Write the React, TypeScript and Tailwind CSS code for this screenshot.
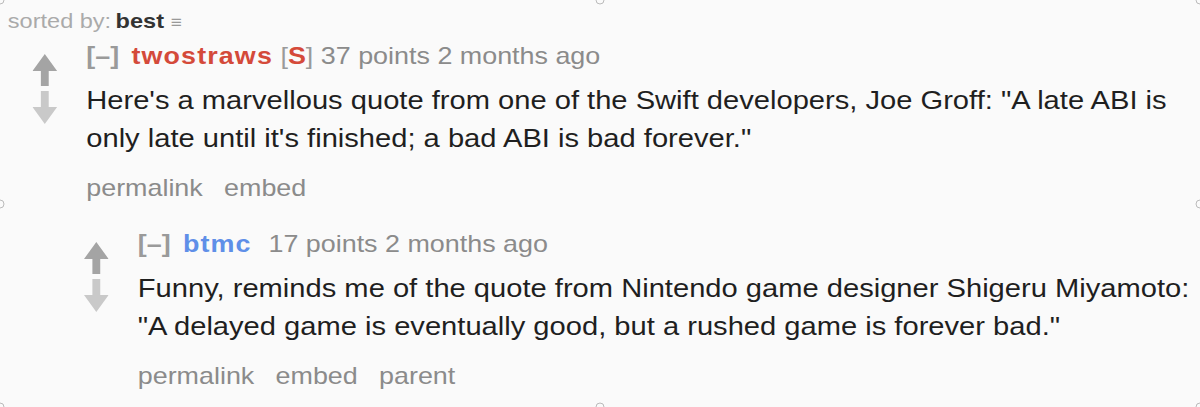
import React from "react";

type CommentProps = {
  author: string;
  authorClass: string;
  submitter?: boolean;
  points: number;
  age: string;
  lines: string[];
  buttons: string[];
};

const Arrows = () => (
  <div className="flex flex-col items-center gap-[5px] pt-[13px] w-[22px] shrink-0">
    {/* up */}
    <svg width="22" height="32" viewBox="0 0 22 32">
      <path d="M11 0 L22 17 L14.5 17 L14.5 32 L7.5 32 L7.5 17 L0 17 Z" fill="#a4a4a4" />
    </svg>
    {/* down */}
    <svg width="22" height="33" viewBox="0 0 22 33">
      <path d="M7.5 0 L14.5 0 L14.5 16 L22 16 L11 33 L0 16 L7.5 16 Z" fill="#c9c9c9" />
    </svg>
  </div>
);

const Comment = ({ author, authorClass, submitter, points, age, lines, buttons }: CommentProps) => {
  return (
    <div className="flex gap-[26px]">
      <Arrows />
      <div className="flex flex-col">
        {/* Tagline */}
        <p className="text-[24px] leading-[30px] text-[#8b8b8b] whitespace-nowrap">
          <span className="font-bold text-[#9a9a9a]">[–]</span>
          <span className={`ml-[11px] font-bold tracking-[1px] ${authorClass}`}>{author}</span>
          {submitter ? (
            <>
              {" "}
              <span className="text-[#9a9a9a]">[</span>
              <span className="font-bold text-[#d54a3a]">S</span>
              <span className="text-[#9a9a9a]">]</span>{" "}
              <span>{points} points {age}</span>
            </>
          ) : (
            <span className="ml-[15px]">{points} points {age}</span>
          )}
        </p>
        {/* Body */}
        <div className="mt-[10px] text-[26px] leading-[38px] text-[#1f1f1f] whitespace-nowrap">
          {lines.map((l) => (
            <p key={l}>{l}</p>
          ))}
        </div>
        {/* Buttons */}
        <div className="mt-[16px] flex gap-[19px] text-[24px] leading-[30px] text-[#8b8b8b]">
          {buttons.map((b) => (
            <span key={b}>{b}</span>
          ))}
        </div>
      </div>
    </div>
  );
};

// little resize-handle rings on the window edge
const Handles = () => (
  <svg
    className="pointer-events-none absolute inset-0"
    width="1200"
    height="407"
    viewBox="0 0 1200 407"
    fill="none"
    stroke="#bbb"
    strokeWidth="1"
  >
    {[
      [0, 0],
      [600, 0],
      [1200, 0],
      [0, 204],
      [1200, 204],
      [0, 407],
      [600, 407],
      [1200, 407],
    ].map(([cx, cy]) => (
      <circle key={`${cx}-${cy}`} cx={cx} cy={cy} r="4" />
    ))}
  </svg>
);

export default function App() {
  return (
    <div className="relative w-[1200px] h-[407px] overflow-hidden bg-[#fafafa] font-['Liberation_Sans',Arial,sans-serif]">
      <div className="w-[1071px] origin-top-left scale-x-[1.12]">
        {/* Sort bar */}
        <div className="flex items-baseline gap-[4px] pl-[7px] pt-[9px] text-[21px] leading-[24px] text-[#aaa]">
          <span>sorted by:</span>
          <span className="font-bold text-[#333]">best</span>
          <span className="ml-[2px] text-[#999] text-[17px]">≡</span>
        </div>

        <div className="flex flex-col gap-[26px] pl-[29px] mt-[6px]">
          <Comment
            author="twostraws"
            authorClass="text-[#d44a3a]"
            submitter
            points={37}
            age="2 months ago"
            lines={[
              "Here's a marvellous quote from one of the Swift developers, Joe Groff: \"A late ABI is",
              "only late until it's finished; a bad ABI is bad forever.\"",
            ]}
            buttons={["permalink", "embed"]}
          />
          <div className="pl-[46px]">
            <Comment
              author="btmc"
              authorClass="text-[#5f8fe8]"
              points={17}
              age="2 months ago"
              lines={[
                "Funny, reminds me of the quote from Nintendo game designer Shigeru Miyamoto:",
                "\"A delayed game is eventually good, but a rushed game is forever bad.\"",
              ]}
              buttons={["permalink", "embed", "parent"]}
            />
          </div>
        </div>
      </div>

      <Handles />
    </div>
  );
}
